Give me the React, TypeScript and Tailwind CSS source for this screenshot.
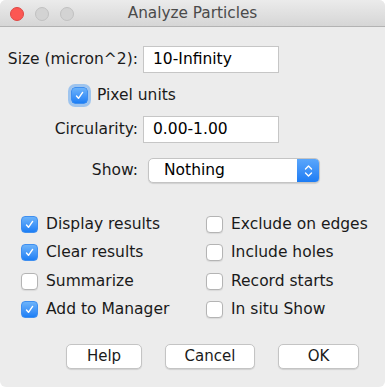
import React from 'react';

// Analyze Particles dialog (ImageJ on macOS)

const font = { fontFamily: '"DejaVu Sans", "Liberation Sans", sans-serif' };

function Check({ checked, glow }: { checked: boolean; glow?: boolean }) {
    return (
        <span
            className={`inline-flex items-center justify-center w-[17px] h-[17px] rounded-[4px] shrink-0 ${checked
                ? 'bg-gradient-to-b from-[#6cb3fa] to-[#1a7ef5] border border-[#3f8ff0]'
                : 'bg-white border border-[#b4b4b4] shadow-[0_1px_1px_rgba(0,0,0,0.08)]'
                } ${glow ? 'ring-[3px] ring-[#7eb3f0]/70' : ''}`}
        >
            {checked && (
                <svg width="11" height="11" viewBox="0 0 11 11" fill="none">
                    <path d="M2.5 6 L4.5 8.3 L8.6 2.4" stroke="white" strokeWidth="1.4" strokeLinecap="round" strokeLinejoin="round" />
                </svg>
            )}
        </span>
    );
}

function Option({ label, checked }: { label: string; checked: boolean }) {
    return (
        <div className="flex items-center h-[28.5px] gap-[8px] text-[15.5px] text-[#1a1a1a]">
            <Check checked={checked} />
            <span>{label}</span>
        </div>
    );
}

function Field({ label, value }: { label: string; value: string }) {
    return (
        <div className="flex items-center">
            <span className="w-[138px] text-right text-[15.5px] text-[#1a1a1a]">{label}</span>
            <div className="ml-[5px] w-[136px] h-[27px] bg-white border border-[#c6c6c6] flex items-center pl-[9px] text-[15.5px] text-black">
                {value}
            </div>
        </div>
    );
}

function Button({ label, width }: { label: string; width: string }) {
    return (
        <button
            className={`${width} h-[25px] bg-white rounded-[5px] border border-[#c4c4c4] shadow-[0_1px_1px_rgba(0,0,0,0.12)] text-[15px] text-[#1a1a1a] flex items-center justify-center`}
        >
            {label}
        </button>
    );
}

export default function App() {
    return (
        <div className="w-[385px] h-[387px] bg-white" style={font}>
            <div className="w-full h-full rounded-[6px] overflow-hidden bg-[#ececec] flex flex-col">
                {/* Title bar */}
                <div className="relative h-[27px] shrink-0 bg-gradient-to-b from-[#ebebeb] to-[#d6d6d6] border-b border-[#b3b3b3] flex items-center justify-center">
                    <div className="absolute left-[10px] top-[7px] flex gap-[11px]">
                        <span className="w-[14px] h-[14px] rounded-full bg-[#fc5753] border border-[#df4744]" />
                        <span className="w-[14px] h-[14px] rounded-full bg-[#d3d3d3] border border-[#c1c1c1]" />
                        <span className="w-[14px] h-[14px] rounded-full bg-[#d3d3d3] border border-[#c1c1c1]" />
                    </div>
                    <span className="text-[15.3px] text-[#4a4a4a]">Analyze Particles</span>
                </div>

                {/* Parameters */}
                <div className="mt-[19px]">
                    <Field label="Size (micron^2):" value="10-Infinity" />
                </div>
                <div className="mt-[14px] ml-[71px] h-[17px] flex items-center gap-[9px] text-[15.5px] text-[#1a1a1a]">
                    <Check checked glow />
                    <span>Pixel units</span>
                </div>
                <div className="mt-[12px]">
                    <Field label="Circularity:" value="0.00-1.00" />
                </div>
                <div className="mt-[15px] flex items-center">
                    <span className="w-[138px] text-right text-[15.5px] text-[#1a1a1a]">Show:</span>
                    <div className="ml-[10px] w-[172px] h-[25px] bg-white rounded-[5px] border border-[#c4c4c4] shadow-[0_1px_1px_rgba(0,0,0,0.12)] flex overflow-hidden">
                        <span className="flex-1 flex items-center pl-[15px] text-[15.5px] text-black">Nothing</span>
                        <span className="w-[22px] bg-gradient-to-b from-[#5aa6fb] to-[#1b7cf4] flex items-center justify-center">
                            <svg width="9" height="14" viewBox="0 0 9 14" fill="none">
                                <path d="M1.5 5 L4.5 2 L7.5 5 M1.5 9 L4.5 12 L7.5 9" stroke="white" strokeWidth="1.4" strokeLinecap="round" strokeLinejoin="round" />
                            </svg>
                        </span>
                    </div>
                </div>

                {/* Options */}
                <div className="mt-[27px] ml-[21px] grid grid-cols-[185px_1fr]">
                    <div className="flex flex-col">
                        <Option label="Display results" checked />
                        <Option label="Clear results" checked />
                        <Option label="Summarize" checked={false} />
                        <Option label="Add to Manager" checked />
                    </div>
                    <div className="flex flex-col">
                        <Option label="Exclude on edges" checked={false} />
                        <Option label="Include holes" checked={false} />
                        <Option label="Record starts" checked={false} />
                        <Option label="In situ Show" checked={false} />
                    </div>
                </div>

                {/* Buttons */}
                <div className="mt-[20px] ml-[66px] flex gap-[23px]">
                    <Button label="Help" width="w-[76px]" />
                    <Button label="Cancel" width="w-[90px]" />
                    <Button label="OK" width="w-[81px]" />
                </div>
            </div>
        </div>
    );
}
